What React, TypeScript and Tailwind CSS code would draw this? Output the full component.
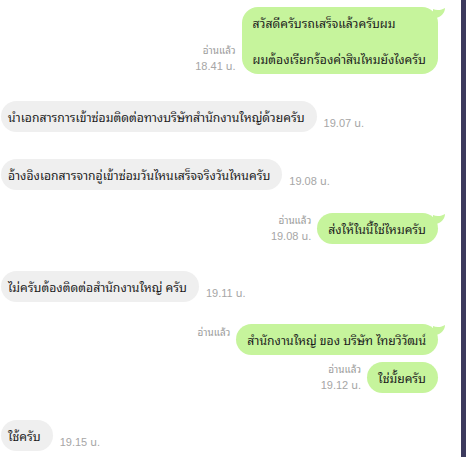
import React from 'react';

type Msg = {
  side: 'me' | 'them';
  text: string;
  read?: boolean;
  time?: string;
  tail?: boolean;
  mt: string;
  metaTop?: boolean;
};

const messages: Msg[] = [
  { side: 'me', text: 'สวัสดีครับรถเสร็จแล้วครับผม\n\nผมต้องเรียกร้องค่าสินไหมยังไงครับ', read: true, time: '18.41 น.', tail: true, mt: 'mt-[7px]' },
  { side: 'them', text: 'นำเอกสารการเข้าซ่อมติดต่อทางบริษัทสำนักงานใหญ่ด้วยครับ', time: '19.07 น.', mt: 'mt-[27px]' },
  { side: 'them', text: 'อ้างอิงเอกสารจากอู่เข้าซ่อมวันไหนเสร็จจริงวันไหนครับ', time: '19.08 น.', mt: 'mt-[27px]' },
  { side: 'me', text: 'ส่งให้ในนี้ใช่ไหมครับ', read: true, time: '19.08 น.', tail: true, mt: 'mt-[22px]' },
  { side: 'them', text: 'ไม่ครับต้องติดต่อสำนักงานใหญ่ ครับ', time: '19.11 น.', mt: 'mt-[27px]' },
  { side: 'me', text: 'สำนักงานใหญ่ ของ บริษัท ไทยวิวัฒน์', read: true, tail: true, mt: 'mt-[22px]', metaTop: true },
  { side: 'me', text: 'ใช่มั้ยครับ', read: true, time: '19.12 น.', mt: 'mt-[6px]' },
  { side: 'them', text: 'ใช้ครับ', time: '19.15 น.', mt: 'mt-[27px]' },
];

const Tail = () => (
  <svg className="absolute -right-[9px] top-0" width="14" height="14" viewBox="0 0 14 14">
    <path d="M0 2 C4 4 9 3 12 1 C12 6 8 10 3 11 L0 11 Z" fill="#c6f49c" />
  </svg>
);

const Meta = ({ read, time, align }: { read?: boolean; time?: string; align: 'right' | 'left' }) => (
  <div className={`flex flex-col ${align === 'right' ? 'items-end' : 'items-start'}`}>
    {read && (
      <span className="h-4 font-['Noto_Sans_Thai_Looped','Noto_Sans_Thai',sans-serif] text-[10px] leading-[16px] text-[#9b9b9b]">
        อ่านแล้ว
      </span>
    )}
    {time && (
      <span className="h-4 font-['Liberation_Sans','Noto_Sans_Thai',sans-serif] text-[11px] leading-[16px] text-[#a6a6a6]">
        {time}
      </span>
    )}
  </div>
);

const Row = ({ m }: { m: Msg }) => {
  if (m.side === 'me') {
    return (
      <div className={`flex flex-row justify-end gap-[6px] pr-[23px] ${m.metaTop ? 'items-start' : 'items-end'} ${m.mt}`}>
        <Meta read={m.read} time={m.time} align="right" />
        <div className="relative whitespace-pre-line rounded-[16px] bg-[#c6f49c] pb-[6px] pl-[11px] pr-[12px] pt-[7px] text-[12.2px] leading-[18px] text-[#1c1c1c]">
          {m.text}
          {m.tail && <Tail />}
        </div>
      </div>
    );
  }
  return (
    <div className={`flex flex-row items-end gap-[7px] pl-[1px] ${m.mt}`}>
      <div className="rounded-[16px] bg-[#efefef] pb-[6px] pl-[7px] pr-[12px] pt-[7px] text-[12.2px] leading-[18px] text-[#1c1c1c]">
        {m.text}
      </div>
      <div className="pb-[1px]">
        <Meta time={m.time} align="left" />
      </div>
    </div>
  );
};

export default function App() {
  return (
    <div className="flex h-[457px] w-[466px] flex-row overflow-hidden bg-white font-['Noto_Sans_Thai_Looped','Noto_Sans_Thai',sans-serif]">
      <div className="flex w-[461px] flex-col">
        {messages.map((m, i) => (
          <Row key={i} m={m} />
        ))}
      </div>
      <div className="w-[5px] bg-[#3c3a5d]" />
    </div>
  );
}
